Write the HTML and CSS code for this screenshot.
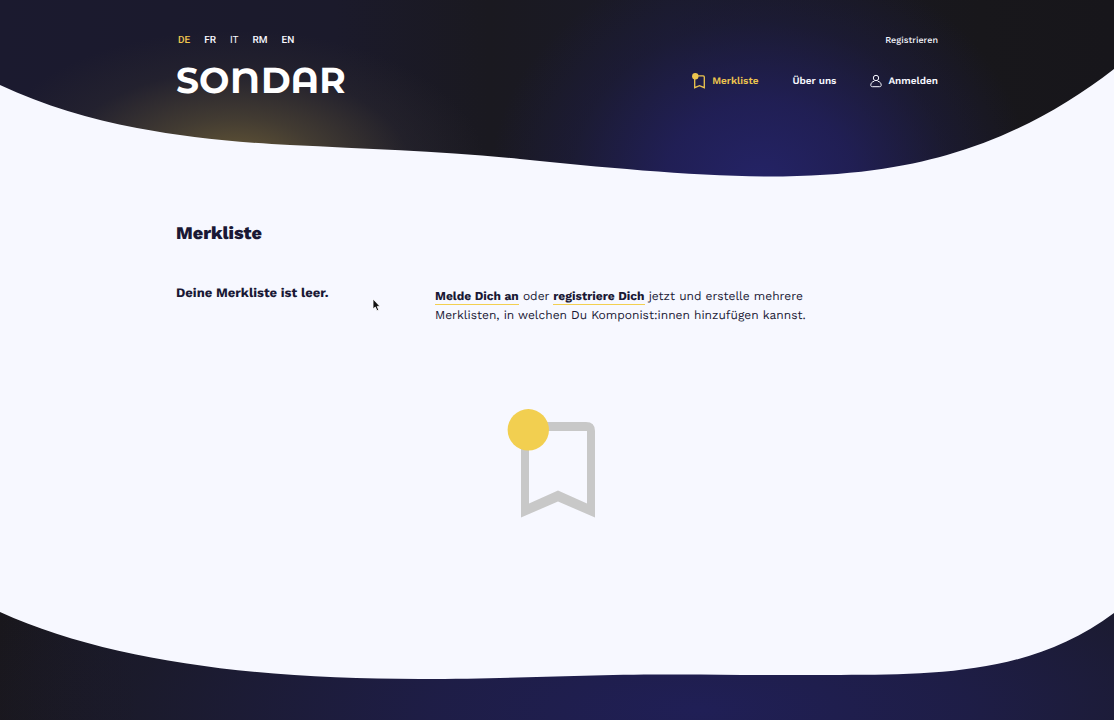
FILE: index.html
```html
<!DOCTYPE html>
<html lang="de">
<head>
<meta charset="utf-8">
<meta name="viewport" content="width=device-width, initial-scale=1">
<title>Merkliste – SONDAR</title>
<link rel="stylesheet" href="styles.css">
</head>
<body>
<header class="site-header">
  <svg class="header-wave" viewBox="0 0 1114 178" preserveAspectRatio="none" aria-hidden="true">
    <path d="M0 85C45 106 90 119 137 128C185 137 230 142 290 145C370 149 440 151 520 159C600 167 690 176 768 176.500C850 176.500 905 167 947 155C1010 137 1065 107 1114 69V179H0Z"/>
  </svg>
  <div class="container header-rows">
    <div class="row">
      <nav class="languages" aria-label="Sprache">
        <a class="active" href="#de">DE</a>
        <a href="#fr">FR</a>
        <a class="light" href="#it">IT</a>
        <a href="#rm">RM</a>
        <a href="#en">EN</a>
      </nav>
      <a class="register" href="#registrieren">Registrieren</a>
    </div>
    <div class="row main-row">
      <a class="logo" href="#start">SO<span class="logo-n">N</span>DAR</a>
      <nav class="main-nav" aria-label="Hauptmenü">
        <a class="active" href="#merkliste">
          <svg width="14" height="17" viewBox="0 0 14 17" aria-hidden="true">
            <path d="M2.700 2.900H11.200Q12.300 2.900 12.300 4V14.700L7.500 12.600L2.700 14.700Z" fill="none" stroke="currentColor" stroke-width="1.300"/>
            <circle cx="3.300" cy="3.200" r="3.200" fill="currentColor"/>
          </svg>
          Merkliste
        </a>
        <a href="#ueber-uns">Über uns</a>
        <a href="#anmelden">
          <svg width="12" height="14" viewBox="0 0 12 14" fill="none" stroke="currentColor" stroke-width="1" aria-hidden="true">
            <circle cx="6" cy="4" r="2.700"/>
            <path d="M4.300 7.200C2 7.700 .8 9.200 .8 11.200C.8 12.200 1.300 12.700 2.300 12.700H9.700C10.700 12.700 11.200 12.200 11.200 11.200C11.200 9.200 10 7.700 7.700 7.200"/>
          </svg>
          Anmelden
        </a>
      </nav>
    </div>
  </div>
</header>

<main class="container content">
  <h1>Merkliste</h1>
  <div class="columns">
    <h2>Deine Merkliste ist leer.</h2>
    <p><a href="#anmelden">Melde Dich an</a> oder <a href="#registrieren">registriere Dich</a> jetzt und erstelle mehrere Merklisten, in welchen Du Komponist:innen hinzufügen kannst.</p>
  </div>
  <svg class="empty-icon" width="100" height="110" viewBox="507 408 100 110" aria-hidden="true">
    <path d="M521 422H586Q595 422 595 431V517.500L558 501.500L521 517.500ZM529 431V503.500L558 490.500L587 503.500V431Z" fill="#c8c8c8" fill-rule="evenodd"/>
    <circle cx="528.300" cy="429.800" r="20.700" fill="#f2cf50"/>
  </svg>
</main>

<footer class="site-footer">
  <svg class="footer-wave" viewBox="0 0 1114 120" preserveAspectRatio="none" aria-hidden="true">
    <path d="M0 -1V12C110 62 260 79 420 79C520 79 580 74 680 74.500C730 75 790 75 840 75C940 75 1034 73 1114 13V-1Z"/>
  </svg>
</footer>

<svg class="pointer" width="9" height="14" viewBox="0 0 9 14" aria-hidden="true">
  <path d="M1 1V11L3.300 9L5 12.700L6.700 12L5.200 8.400H8Z" fill="#111" stroke="#fff" stroke-width=".8"/>
</svg>
</body>
</html>
```
FILE: styles.css
```css
* {
  box-sizing: border-box;
}

body {
  margin: 0;
  min-height: 100vh;
  display: flex;
  flex-direction: column;
  position: relative;
  background: #f7f8ff;
  color: #1a1835;
  font-family: "Work Sans", Inter, "Liberation Sans", sans-serif;
  text-rendering: geometricPrecision;
}

a {
  color: inherit;
  text-decoration: none;
}

.container {
  width: calc(100% - 32px);
  max-width: 762px;
  margin: 0 auto;
}

.site-header {
  position: relative;
  padding: 31px 0 77px;
  color: #f7f8ff;
  background:
    radial-gradient(ellipse 250px 135px at 235px 165px, #6a5b36 0%, #4f4634c0 35%, #2e2b3068 70%, #1b1a2400 100%),
    radial-gradient(ellipse 270px 230px at 760px 182px, #242366 0%, #22205fd0 35%, #1e1d4870 70%, #1a192600 100%),
    linear-gradient(90deg, #1b1a2f 0%, #1b1a2b 30%, #1a1920 44%, #1a1a28 60%, #18171b 88%, #17161b 100%);
}

.header-wave {
  position: absolute;
  inset: 0;
  width: 100%;
  height: 100%;
  fill: #f7f8ff;
}

.header-rows {
  position: relative;
  display: grid;
  gap: 10px;
}

.row {
  display: flex;
  align-items: center;
  justify-content: space-between;
  height: 20px;
}

.main-row {
  height: 40px;
}

.languages {
  display: flex;
  gap: 14px;
  padding-left: 2px;
  font: 500 10px/20px Roboto, sans-serif;
}

.light {
  font-weight: 400;
}

.active {
  color: #edc54e;
}

.register {
  font-size: 9px;
  font-weight: 500;
  line-height: 20px;
}

.logo {
  color: #fff;
  font: 700 36px/40px "Montserrat Alternates", Montserrat, "Work Sans", sans-serif;
}

.logo-n {
  font-size: 46px;
  font-weight: 600;
  line-height: 0;
  text-transform: lowercase;
}

.main-nav {
  display: flex;
  gap: 34px;
  font-size: 10px;
  font-weight: 600;
}

.main-nav a {
  display: flex;
  align-items: center;
  gap: 6px;
}

.content {
  flex: 1;
  padding-top: 44px;
}

h1 {
  margin: 0;
  font-size: 18px;
  font-weight: 800;
  line-height: 24px;
}

.columns {
  display: grid;
  grid-template-columns: 259px minmax(0, 390px);
  margin-top: 38px;
}

h2 {
  margin: 0;
  font-size: 13px;
  font-weight: 700;
  line-height: 20px;
}

.columns p {
  margin: 3px 0 0;
  font-size: 12px;
  line-height: 19px;
}

.columns p a {
  padding-bottom: 1px;
  border-bottom: 1px solid #f2cf50;
  font-weight: 700;
}

.empty-icon {
  display: block;
  margin: 83px auto 0;
}

.site-footer {
  background:
    radial-gradient(ellipse 760px 240px at 700px 110px, #201f56 0%, #1f1e4ecc 35%, #1c1b3066 75%, #1a192600 100%),
    linear-gradient(90deg, #19171c, #1a1a28 12%, #1a1a28);
}

.footer-wave {
  display: block;
  width: 100%;
  height: 120px;
  fill: #f7f8ff;
}

.pointer {
  position: absolute;
  left: 372px;
  top: 298px;
}
```
